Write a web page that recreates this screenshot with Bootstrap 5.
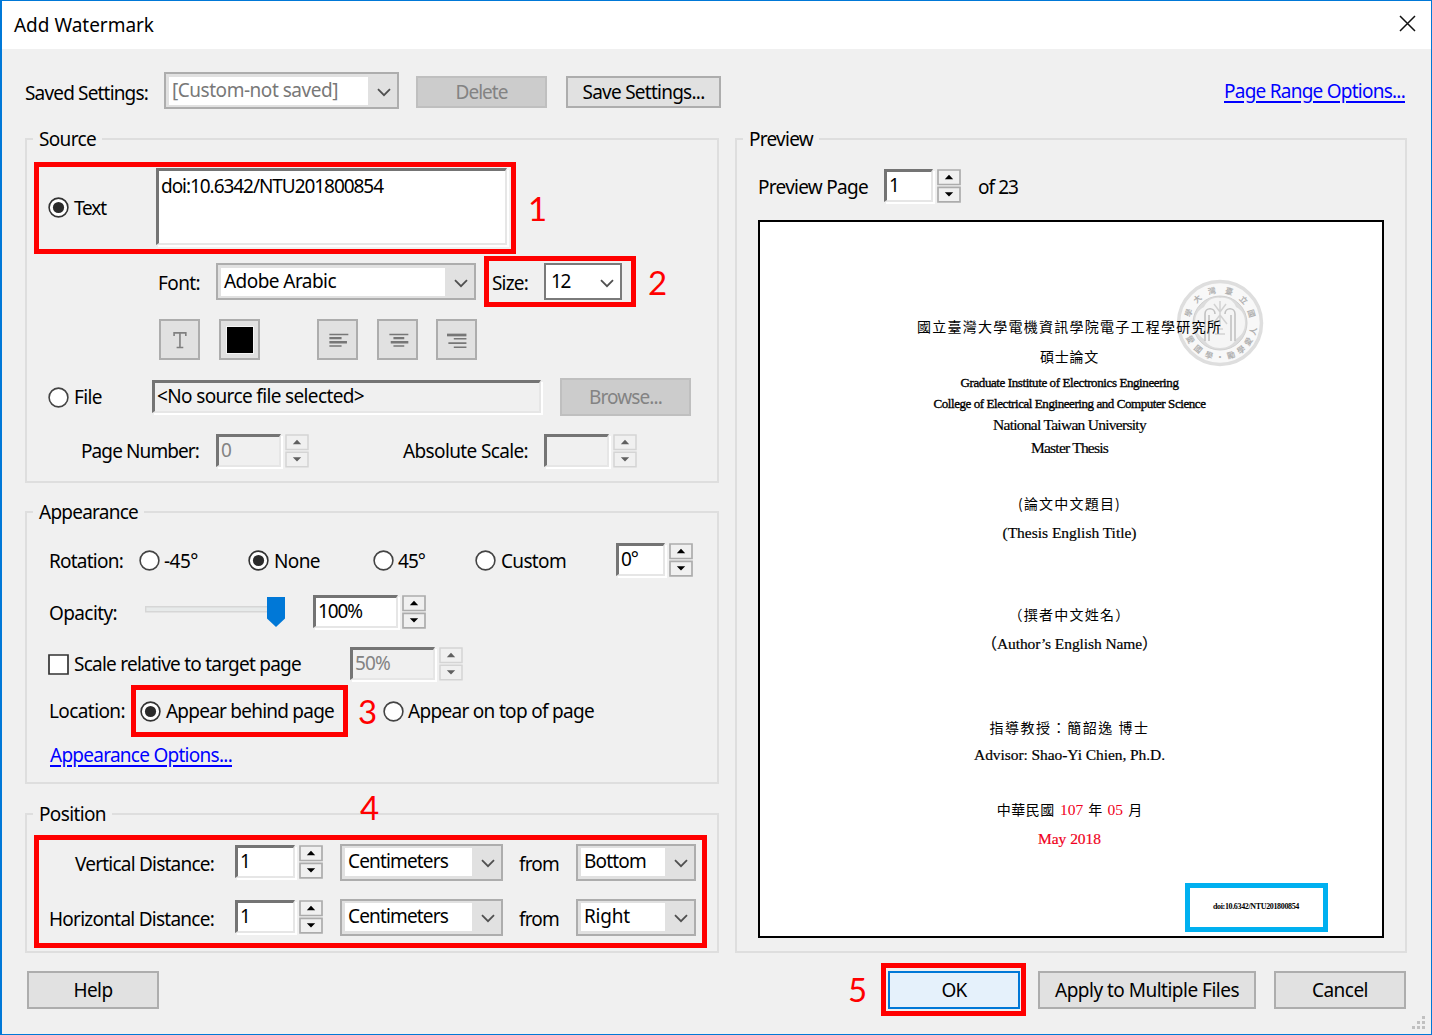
<!DOCTYPE html>
<html lang="en">
<head>
<meta charset="utf-8">
<title>Add Watermark</title>
<link href="https://cdn.jsdelivr.net/npm/bootstrap@5.3.0/dist/css/bootstrap.min.css" rel="stylesheet">
<style>
body{font-family:"Noto Sans","Noto Sans CJK TC",sans-serif;font-size:19px;line-height:26px;color:#000;background:#f0f0f0;overflow:hidden}
.dlg{width:1432px;height:1035px;border:1px solid #0078d7;border-left-width:2px;background:#f0f0f0}
.titlebar{height:48px;padding:0 15px 0 12px;background:#fff}
.titlebar svg{margin-top:-3px}
.topbar{height:37px;margin-top:23px;padding-left:23px;padding-right:26px}
.t{white-space:pre;display:inline-block;line-height:26px;height:26px}
.cols{margin:29px 23px 0 23px;gap:16px}
.leftcol{width:694px}
.grp{border:2px solid #dedede}
.grp>.leg{display:table;margin:-14px 0 0 6px;padding:0 6px;background:#f0f0f0;line-height:26px;height:26px}
.gsrc{height:345px}.gapp{height:273px;margin-top:28px}.gpos{height:140px;margin-top:29px}
.gprev{width:672px;height:815px}
.gr{display:grid;align-items:center}
.r-text{margin-top:16px;padding-left:21px;height:79px;grid-template-columns:26px 82px 353px}
.r-font{margin-top:16px;padding-left:131px;height:37px;grid-template-columns:58px 276px 52px 78px}
.r-icons{margin-top:19px;padding-left:132px;height:41px;grid-template-columns:60px 98px 60px 59px 41px}
.r-file{margin-top:18px;padding-left:21px;height:38px;grid-template-columns:26px 78px 408px 131px}
.r-num{margin-top:17px;padding-left:54px;height:36px;grid-template-columns:135px 69px 118px 141px 69px 24px}
.r-rot{margin-top:17px;padding-left:22px;height:36px;grid-template-columns:90px 25px 84px 26px 99px 25px 77px 26px 115px 53px 24px}
.r-opa{margin-top:16px;padding-left:22px;height:36px;grid-template-columns:96px 168px 89px 24px}
.r-scale{margin-top:16px;padding-left:21px;height:36px;grid-template-columns:26px 276px 89px 24px}
.r-loc{margin-top:14px;padding-left:22px;height:30px;grid-template-columns:91px 26px 217px 25px 186px}
.r-link{padding-left:23px;margin-top:16px}
.r-pos{padding-left:22px;height:38px;grid-template-columns:186px 64px 41px 179px 57px 120px}
.r-pos>.t:first-child{justify-self:end;margin-right:21px}
.r-prev{margin-top:16px;padding-left:21px;height:36px;grid-template-columns:126px 53px 41px 60px}
.r-rot>.t,.r-prev>.t,.r-font>.t,.r-opa>.t{margin-top:2px}
.r-pos>.t{margin-top:4px}
.second{margin-top:17px}
.sunk{border:3px solid #747474;border-width:3px 2px 2px 3px;border-right-color:#e6e6e6;border-bottom-color:#e6e6e6;box-shadow:2px 2px 0 #fff;background:#fff;height:33px;padding:0 0 0 2px;margin-bottom:2px;overflow:hidden}
.sunk.off{background:#f0f0f0;color:#838383}
.area{height:77px;width:351px}
.area .t{margin-top:2px}
.fname{width:389px}
.combo{border:2px solid #adadad;background:#e1e1e1;height:37px;padding:3px 6px 3px 3px;display:flex;align-items:center;justify-content:space-between}
.combo .fld{flex:1;background:#fff;height:28px;padding-left:3px;margin-right:9px}
.combo svg{margin-top:3px}
.combo.plain{background:#fff;border-color:#7a7a7a}
.combo .sz{padding-left:2px;margin-right:0}
.cfont{width:260px}.cunit{width:163px}
.saved{width:235px;margin-left:16px}
.saved .fld{color:#787878}
.wbtn{border:2px solid #adadad;border-radius:0;background:#e1e1e1;color:#000;font-size:19px;line-height:26px;padding:0;display:flex;align-items:center;justify-content:center}
.wbtn.off{background:#ccc;border-color:#bfbfbf;color:#838383}
.wbtn.def{background:#e5f1fb;border-color:#0078d7}
.del{width:131px;height:32px;margin:3px 0 0 17px}
.save{width:155px;height:32px;margin:3px 0 0 19px}
.ib{width:41px;height:41px}
.swatch{width:28px;height:28px;background:#000;border:1px solid #f4f4f4}
.lnk{color:#00f;text-decoration:underline;text-decoration-thickness:1.5px;text-underline-offset:3px}
.w49{width:49px}.w65{width:65px}.w61{width:60px}.w85{width:85px}
.bottom{margin:18px 25px 0 25px}
.bottom .wbtn{height:38px;padding-bottom:1px}
.b131{width:132px}.bapply{width:218px;margin:0 18px}
.dv{width:24px;height:34px;display:block}
.paper{width:626px;height:718px;margin:16px 0 0 21px;border:2px solid #000;background:#fff;color:#000;text-align:center;padding-right:3px;font-family:"Liberation Serif","Noto Sans CJK TC",serif;font-size:15.5px;line-height:20px;overflow:hidden}
.paper .ln{height:20px;white-space:pre;-webkit-text-stroke:.2px currentColor}
.paper .zh{font-family:"Noto Sans CJK TC",sans-serif;font-size:14px;-webkit-text-stroke-width:0}
.m10{margin-top:10px}.m9{margin-top:9px}
.p1{margin-top:94px}.p3{margin-top:7px}.paper .p3,.paper .p4{font-size:13px;-webkit-text-stroke-width:.35px}.p4,.p5{margin-top:1px}.p6{margin-top:3px}.p7{margin-top:35px}.p8{margin-top:10px}.p9{margin-top:61px}.p10{margin-top:10px}.p11{margin-top:63px}.p12{margin-top:8px}.p13{margin-top:34px}.p14{margin-top:10px}
.roman{font-family:"Liberation Serif",serif;font-size:15.5px}
.p13 .roman{margin:0 2px}
.red{color:#f00020}
.ann{position:absolute;border:5px solid #f00;z-index:5}
.num{position:absolute;z-index:5;color:#f00;font-family:Lato,sans-serif;font-size:33px;line-height:33px}
.a1{left:34px;top:162px;width:482px;height:92px}
.a2{left:484px;top:256px;width:152px;height:51px}
.a3{left:131px;top:685px;width:217px;height:52px}
.a4{left:34px;top:835px;width:673px;height:113px}
.a5{left:881px;top:963px;width:145px;height:53px}
.a6{left:1185px;top:883px;width:143px;height:49px;border-color:#00b0f0}
.n1{left:528px;top:192px}.n2{left:648px;top:266px}.n3{left:358px;top:695px}.n4{left:360px;top:791px}.n5{left:848px;top:973px}
.seal{position:absolute;left:1176px;top:279px;z-index:1}
.wm{position:absolute;left:1213px;top:901px;z-index:4;font:bold 8px/12px "Liberation Serif",serif;white-space:pre}
.grip{position:absolute;right:5px;bottom:4px}
.zi{position:relative;z-index:2}
</style>
<script src="https://cdn.jsdelivr.net/npm/bootstrap@5.3.0/dist/js/bootstrap.bundle.min.js"></script>
</head>
<body>
<svg width="0" height="0" class="position-absolute">
<symbol id="ron" viewBox="0 0 21 21"><circle cx="10.5" cy="10.5" r="9.4" fill="#fff" stroke="#333" stroke-width="1.6"/><circle cx="10.5" cy="10.5" r="5.6" fill="#2b2b2b"/></symbol>
<symbol id="roff" viewBox="0 0 21 21"><circle cx="10.5" cy="10.5" r="9.4" fill="#fff" stroke="#444" stroke-width="1.6"/></symbol>
<symbol id="chev" viewBox="0 0 14 9"><path d="M1 1.2l6 6 6-6" fill="none" stroke="#505050" stroke-width="1.8"/></symbol>
<symbol id="spin" viewBox="0 0 24 34"><path d="M1 1h22v14.5H1zM1 18.3h22v14.5H1z" fill="#f0f0f0" stroke="#acacac" stroke-width="1.7"/><path d="M7.8 10.2l4.2-4.4 4.2 4.4zM7.8 23.3h8.4L12 27.6z" fill="#000"/></symbol>
<symbol id="spoff" viewBox="0 0 24 34"><path d="M1 1h22v14.5H1zM1 18.3h22v14.5H1z" fill="#f0f0f0" stroke="#d4d4d4" stroke-width="1.5"/><path d="M7.8 10.2l4.2-4.4 4.2 4.4zM7.8 23.3h8.4L12 27.6z" fill="#606060"/></symbol>
</svg>
<div class="dlg position-relative">
<div class="titlebar d-flex align-items-center justify-content-between"><span class="t" data-w="140">Add Watermark</span><svg width="17" height="17" viewBox="0 0 17 17"><path d="M1 1l15 15M16 1L1 16" stroke="#111" stroke-width="1.5"/></svg></div>
<div class="topbar d-flex align-items-center">
<span class="t mt-1" data-w="123">Saved Settings:</span>
<div class="combo saved"><div class="fld"><span class="t" data-w="166">[Custom-not saved]</span></div><svg width="14" height="9"><use href="#chev"/></svg></div>
<button class="btn wbtn off del"><span class="t" data-w="52">Delete</span></button>
<button class="btn wbtn save"><span class="t" data-w="122">Save Settings...</span></button>
<a class="lnk ms-auto t" data-w="181">Page Range Options...</a>
</div>
<div class="cols d-flex">
<div class="leftcol">
<section class="grp gsrc"><div class="leg"><span class="t" data-w="57">Source</span></div>
<div class="gr r-text"><svg width="21" height="21"><use href="#ron"/></svg><span class="t" data-w="32">Text</span><div class="sunk area"><span class="t" data-w="222">doi:10.6342/NTU201800854</span></div></div>
<div class="gr r-font"><span class="t" data-w="42">Font:</span><div class="combo cfont"><div class="fld"><span class="t" data-w="112">Adobe Arabic</span></div><svg width="14" height="9"><use href="#chev"/></svg></div><span class="t" data-w="36">Size:</span><div class="combo plain"><div class="fld sz"><span class="t" data-w="19">12</span></div><svg width="14" height="9"><use href="#chev"/></svg></div></div>
<div class="gr r-icons">
<button class="btn wbtn ib"><svg width="41" height="41" viewBox="0 0 41 41"><path d="M14.5 16.5v-3.300h13v3.300M21 13.500v15.800M17.300 29.300h7.400" fill="none" stroke="#808080" stroke-width="1.800"/></svg></button>
<button class="btn wbtn ib"><span class="swatch"></span></button>
<button class="btn wbtn ib"><svg width="41" height="41" viewBox="0 0 41 41"><path d="M11.500 15h21M11.500 27.600h13.500" stroke="#777" stroke-width="1.700"/><path d="M11.500 19h13.500M11.500 23.500h19.500" stroke="#777" stroke-width="2.700"/></svg></button>
<button class="btn wbtn ib"><svg width="41" height="41" viewBox="0 0 41 41"><path d="M11.500 15h21M16 27.600h12" stroke="#777" stroke-width="1.700"/><path d="M16 19h12M13 23.500h19.500" stroke="#777" stroke-width="2.700"/></svg></button>
<button class="btn wbtn ib"><svg width="41" height="41" viewBox="0 0 41 41"><path d="M10 15.500h21.500" stroke="#777" stroke-width="3"/><path d="M17.500 19.700h14M11.500 24.500h20M17.500 29.200h14" stroke="#777" stroke-width="1.700"/></svg></button>
</div>
<div class="gr r-file"><svg width="21" height="21"><use href="#roff"/></svg><span class="t" data-w="28">File</span><div class="sunk off fname"><span class="t text-black" data-w="207">&lt;No source file selected&gt;</span></div><button class="btn wbtn off h-100"><span class="t" data-w="73">Browse...</span></button></div>
<div class="gr r-num"><span class="t" data-w="118">Page Number:</span><div class="sunk off w65"><span class="t">0</span></div><svg class="dv"><use href="#spoff"/></svg><span class="t" data-w="125">Absolute Scale:</span><div class="sunk off w65"></div><svg class="dv"><use href="#spoff"/></svg></div>
</section>
<section class="grp gapp"><div class="leg"><span class="t" data-w="99">Appearance</span></div>
<div class="gr r-rot"><span class="t" data-w="74">Rotation:</span><svg width="21" height="21"><use href="#roff"/></svg><span class="t" data-w="34">-45°</span><svg width="21" height="21"><use href="#ron"/></svg><span class="t" data-w="46">None</span><svg width="21" height="21"><use href="#roff"/></svg><span class="t" data-w="27">45°</span><svg width="21" height="21"><use href="#roff"/></svg><span class="t" data-w="65">Custom</span><div class="sunk w49"><span class="t" data-w="17">0°</span></div><svg class="dv"><use href="#spin"/></svg></div>
<div class="gr r-opa"><span class="t" data-w="68">Opacity:</span><svg width="141" height="32" viewBox="0 0 141 32"><path d="M.7 10.700h125v5H.7z" fill="#e7eaea" stroke="#d6d6d6" stroke-width="1.400"/><path d="M122 1h18v21.500l-9 8.500-9-8.500z" fill="#0078d7"/></svg><div class="sunk w85"><span class="t" data-w="44">100%</span></div><svg class="dv"><use href="#spin"/></svg></div>
<div class="gr r-scale"><svg width="21" height="21"><path d="M1 1h19v19H1z" fill="#fff" stroke="#333" stroke-width="1.700"/></svg><span class="t" data-w="227">Scale relative to target page</span><div class="sunk off w85"><span class="t" data-w="35">50%</span></div><svg class="dv"><use href="#spoff"/></svg></div>
<div class="gr r-loc"><span class="t" data-w="76">Location:</span><svg width="21" height="21"><use href="#ron"/></svg><span class="t" data-w="168">Appear behind page</span><svg width="21" height="21"><use href="#roff"/></svg><span class="t" data-w="186">Appear on top of page</span></div>
<div class="r-link"><a class="lnk t" data-w="182">Appearance Options...</a></div>
</section>
<section class="grp gpos"><div class="leg"><span class="t" data-w="67">Position</span></div>
<div class="gr r-pos mt-3"><span class="t" data-w="139">Vertical Distance:</span><div class="sunk w61"><span class="t">1</span></div><svg class="dv"><use href="#spin"/></svg><div class="combo cunit"><div class="fld"><span class="t" data-w="100">Centimeters</span></div><svg width="14" height="9"><use href="#chev"/></svg></div><span class="t" data-w="40">from</span><div class="combo"><div class="fld"><span class="t" data-w="62">Bottom</span></div><svg width="14" height="9"><use href="#chev"/></svg></div></div>
<div class="gr r-pos second"><span class="t" data-w="165">Horizontal Distance:</span><div class="sunk w61"><span class="t">1</span></div><svg class="dv"><use href="#spin"/></svg><div class="combo cunit"><div class="fld"><span class="t" data-w="100">Centimeters</span></div><svg width="14" height="9"><use href="#chev"/></svg></div><span class="t" data-w="40">from</span><div class="combo"><div class="fld"><span class="t" data-w="46">Right</span></div><svg width="14" height="9"><use href="#chev"/></svg></div></div>
</section>
</div>
<section class="grp gprev"><div class="leg"><span class="t" data-w="64">Preview</span></div>
<div class="gr r-prev"><span class="t" data-w="110">Preview Page</span><div class="sunk w49"><span class="t">1</span></div><svg class="dv"><use href="#spin"/></svg><span class="t" data-w="40">of 23</span></div>
<div class="paper">
<div class="ln zh p1 zi"><span data-w="305">國立臺灣大學電機資訊學院電子工程學研究所</span></div>
<div class="ln zh m10"><span data-w="59">碩士論文</span></div>
<div class="ln p3"><span data-w="218">Graduate Institute of Electronics Engineering</span></div>
<div class="ln p4"><span data-w="272">College of Electrical Engineering and Computer Science</span></div>
<div class="ln p5"><span data-w="153">National Taiwan University</span></div>
<div class="ln p6"><span data-w="77">Master Thesis</span></div>
<div class="ln zh p7"><span data-w="103">(論文中文題目)</span></div>
<div class="ln p8"><span data-w="134">(Thesis English Title)</span></div>
<div class="ln zh p9"><span data-w="122">（撰者中文姓名）</span></div>
<div class="ln p10"><span data-w="176">（Author’s English Name）</span></div>
<div class="ln zh p11"><span data-w="160">指導教授：簡韶逸 博士</span></div>
<div class="ln p12"><span data-w="191">Advisor: Shao-Yi Chien, Ph.D.</span></div>
<div class="ln zh p13"><span data-w="58">中華民國</span> <span class="red roman">107</span> 年 <span class="red roman">05</span> 月</div>
<div class="ln red p14"><span data-w="63">May 2018</span></div>
</div>
</section>
</div>
<div class="bottom d-flex">
<button class="btn wbtn b131"><span class="t" data-w="39">Help</span></button>
<button class="btn wbtn def b131 ms-auto"><span class="t" data-w="25">OK</span></button>
<button class="btn wbtn bapply"><span class="t" data-w="184">Apply to Multiple Files</span></button>
<button class="btn wbtn b131"><span class="t" data-w="56">Cancel</span></button>
</div>
<svg class="grip" width="14" height="14" viewBox="0 0 14 14"><path d="M10 0h3v3h-3zM10 5h3v3h-3zM5 5h3v3H5zM10 10h3v3h-3zM5 10h3v3H5zM0 10h3v3H0z" fill="#c0c0c0"/></svg>
</div>
<svg class="seal" width="88" height="88" viewBox="0 0 88 88">
<circle cx="44" cy="44" r="41.500" fill="#f8f8f8" stroke="#dedede" stroke-width="3.500"/>
<circle cx="44" cy="44" r="27" fill="#dcdcdc" stroke="#d0d0d0" stroke-width="1"/>
<path d="M44 19c8-1 14 3 16 9 6 3 9 8 9 16s-4 13-9 16c-3 6-9 9-16 9s-13-3-16-9c-5-3-9-8-9-16s3-13 9-16c3-6 8-10 16-9z" fill="#f5f5f5"/>
<path d="M29 62V35c0-7 10-7 10 0M33 62V36M59 62V35c0-7-10-7-10 0M55 62V36" fill="none" stroke="#c2c2c2" stroke-width="1.600"/>
<path d="M44 22v26M38 25l6 8 6-8M37 45l7-9 7 9M39 55h10M41 50h6" fill="none" stroke="#d2d2d2" stroke-width="1.500"/>
<g font-family="Noto Sans CJK TC, sans-serif" font-size="8" fill="#b0b0b0" font-weight="bold" text-anchor="middle">
<text transform="translate(44 44) rotate(-72) translate(0 -30)">學</text>
<text transform="translate(44 44) rotate(-43) translate(0 -30)">大</text>
<text transform="translate(44 44) rotate(-14) translate(0 -30)">灣</text>
<text transform="translate(44 44) rotate(16) translate(0 -30)">臺</text>
<text transform="translate(44 44) rotate(46) translate(0 -30)">立</text>
<text transform="translate(44 44) rotate(73) translate(0 -30)">國</text>
<text transform="translate(44 44) rotate(61) translate(0 37)">愛</text>
<text transform="translate(44 44) rotate(40) translate(0 37)">國</text>
<text transform="translate(44 44) rotate(19) translate(0 37)">學</text>
<text transform="translate(44 44) translate(0 37)">・</text>
<text transform="translate(44 44) rotate(-19) translate(0 37)">勵</text>
<text transform="translate(44 44) rotate(-38) translate(0 37)">學</text>
<text transform="translate(44 44) rotate(-57) translate(0 37)">愛</text>
<text transform="translate(44 44) rotate(-76) translate(0 37)">人</text>
</g>
</svg>
<div class="wm"><span data-w="86">doi:10.6342/NTU201800854</span></div>
<div class="ann a1"></div><div class="ann a2"></div><div class="ann a3"></div><div class="ann a4"></div><div class="ann a5"></div><div class="ann a6"></div>
<div class="num n1">1</div><div class="num n2">2</div><div class="num n3">3</div><div class="num n4">4</div><div class="num n5">5</div>
<script>
// Track each caption so that it fills its nominal width in pixels.
document.querySelectorAll('[data-w]').forEach(function(e){
  var n=Array.from(e.textContent).length;
  if(e.parentElement.classList.contains('gr')&&getComputedStyle(e).justifySelf!=='end')e.style.justifySelf='start';
  var w=e.getBoundingClientRect().width;
  e.style.letterSpacing=((+e.dataset.w-w)/n).toFixed(3)+'px';
});
</script>
</body>
</html>
